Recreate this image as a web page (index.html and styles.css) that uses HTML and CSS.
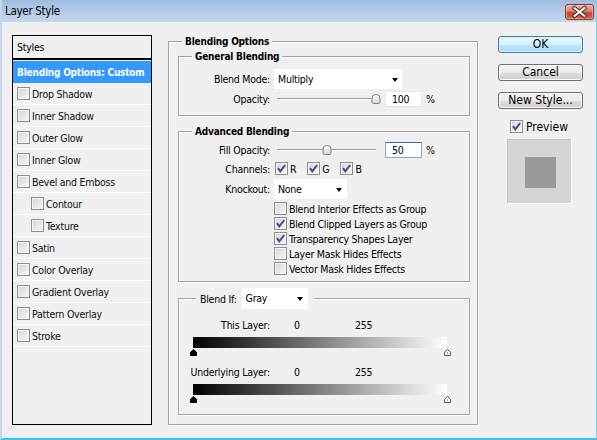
FILE: index.html
```html
<!DOCTYPE html>
<html>
<head>
<meta charset="utf-8">
<title>Layer Style</title>
<link rel="stylesheet" href="styles.css">
</head>
<body>
<div class="window">
  <div class="titlebar">
    <span class="title">Layer Style</span>
    <button class="close" aria-label="Close">
      <svg width="29" height="16" viewBox="0 0 29 16">
        <path d="M9.5 4 L19.5 12 M19.5 4 L9.5 12" stroke="#5a1c12" stroke-width="4" stroke-linecap="square"/>
        <path d="M9.5 4 L19.5 12 M19.5 4 L9.5 12" stroke="#ffffff" stroke-width="2" stroke-linecap="square"/>
      </svg>
    </button>
  </div>

  <div class="content">
    <!-- effect list -->
    <div class="style-list">
      <div class="list-head">Styles</div>
      <div class="list-item selected">Blending Options: Custom</div>
      <div class="list-item"><span class="cb"></span>Drop Shadow</div>
      <div class="list-item"><span class="cb"></span>Inner Shadow</div>
      <div class="list-item"><span class="cb"></span>Outer Glow</div>
      <div class="list-item"><span class="cb"></span>Inner Glow</div>
      <div class="list-item"><span class="cb"></span>Bevel and Emboss</div>
      <div class="list-item sub"><span class="cb"></span>Contour</div>
      <div class="list-item sub"><span class="cb"></span>Texture</div>
      <div class="list-item"><span class="cb"></span>Satin</div>
      <div class="list-item"><span class="cb"></span>Color Overlay</div>
      <div class="list-item"><span class="cb"></span>Gradient Overlay</div>
      <div class="list-item"><span class="cb"></span>Pattern Overlay</div>
      <div class="list-item"><span class="cb"></span>Stroke</div>
    </div>

    <!-- blending options -->
    <div class="group outer">
      <div class="group-title">Blending Options</div>

      <div class="group inner general">
        <div class="group-title">General Blending</div>
        <div class="row r-mode">
          <span class="lbl">Blend Mode:</span>
          <div class="select sel-mode">Multiply<span class="arrow"></span></div>
        </div>
        <div class="row r-num">
          <span class="lbl">Opacity:</span>
          <div class="slider"><div class="track"></div><div class="thumb" style="left:100%"></div></div>
          <div class="num">100</div><span class="pct">%</span>
        </div>
      </div>

      <div class="group inner advanced">
        <div class="group-title">Advanced Blending</div>
        <div class="row r-num r-fill">
          <span class="lbl">Fill Opacity:</span>
          <div class="slider"><div class="track"></div><div class="thumb" style="left:50%"></div></div>
          <div class="num focus">50</div><span class="pct">%</span>
        </div>
        <div class="row r-chan">
          <span class="lbl">Channels:</span>
          <div class="channels">
            <span class="chan"><span class="cb on"><svg width="11" height="11" viewBox="0 0 11 11"><path d="M2 5.2 L4.3 8.3 L9.2 2" fill="none" stroke="#3b4d8c" stroke-width="2"/></svg></span>R</span>
            <span class="chan"><span class="cb on"><svg width="11" height="11" viewBox="0 0 11 11"><path d="M2 5.2 L4.3 8.3 L9.2 2" fill="none" stroke="#3b4d8c" stroke-width="2"/></svg></span>G</span>
            <span class="chan"><span class="cb on"><svg width="11" height="11" viewBox="0 0 11 11"><path d="M2 5.2 L4.3 8.3 L9.2 2" fill="none" stroke="#3b4d8c" stroke-width="2"/></svg></span>B</span>
          </div>
        </div>
        <div class="row r-mode r-knock">
          <span class="lbl">Knockout:</span>
          <div class="select sel-knock">None<span class="arrow"></span></div>
        </div>
        <div class="opts">
          <div class="opt"><span class="cb"></span>Blend Interior Effects as Group</div>
          <div class="opt"><span class="cb on"><svg width="11" height="11" viewBox="0 0 11 11"><path d="M2 5.2 L4.3 8.3 L9.2 2" fill="none" stroke="#3b4d8c" stroke-width="2"/></svg></span>Blend Clipped Layers as Group</div>
          <div class="opt"><span class="cb on"><svg width="11" height="11" viewBox="0 0 11 11"><path d="M2 5.2 L4.3 8.3 L9.2 2" fill="none" stroke="#3b4d8c" stroke-width="2"/></svg></span>Transparency Shapes Layer</div>
          <div class="opt"><span class="cb"></span>Layer Mask Hides Effects</div>
          <div class="opt"><span class="cb"></span>Vector Mask Hides Effects</div>
        </div>
      </div>

      <div class="group inner blendif">
        <div class="blendif-title">
          <span>Blend If:</span>
          <div class="select sel-gray">Gray<span class="arrow"></span></div>
        </div>
        <div class="row r-val">
          <span class="lbl">This Layer:</span>
          <span class="v0">0</span><span class="v1">255</span>
        </div>
        <div class="ramp">
          <div class="bar"></div>
          <div class="markers">
            <svg width="7" height="7" viewBox="0 0 7 7"><path d="M3.5 0.5 L6.5 3.2 L6.5 6.5 L0.5 6.5 L0.5 3.2 Z" fill="#000" stroke="#000"/></svg>
            <svg width="7" height="7" viewBox="0 0 7 7"><path d="M3.5 0.5 L6.5 3.2 L6.5 6.5 L0.5 6.5 L0.5 3.2 Z" fill="#fff" stroke="#555"/><path d="M3.5 3 V5" stroke="#999"/></svg>
          </div>
        </div>
        <div class="row r-val">
          <span class="lbl">Underlying Layer:</span>
          <span class="v0">0</span><span class="v1">255</span>
        </div>
        <div class="ramp">
          <div class="bar"></div>
          <div class="markers">
            <svg width="7" height="7" viewBox="0 0 7 7"><path d="M3.5 0.5 L6.5 3.2 L6.5 6.5 L0.5 6.5 L0.5 3.2 Z" fill="#000" stroke="#000"/></svg>
            <svg width="7" height="7" viewBox="0 0 7 7"><path d="M3.5 0.5 L6.5 3.2 L6.5 6.5 L0.5 6.5 L0.5 3.2 Z" fill="#fff" stroke="#555"/><path d="M3.5 3 V5" stroke="#999"/></svg>
          </div>
        </div>
      </div>
    </div>

    <!-- dialog buttons and preview -->
    <div class="side">
      <button class="btn default">OK</button>
      <button class="btn">Cancel</button>
      <button class="btn">New Style...</button>
      <div class="preview-check">
        <span class="cb on"><svg width="11" height="11" viewBox="0 0 11 11"><path d="M2 5.2 L4.3 8.3 L9.2 2" fill="none" stroke="#3b4d8c" stroke-width="2"/></svg></span>Preview
      </div>
      <div class="preview"><div class="swatch"></div></div>
    </div>
  </div>
</div>
</body>
</html>
```

FILE: styles.css
```css
* { box-sizing: border-box; }

html, body {
  margin: 0;
  padding: 0;
}

body {
  width: 597px;
  height: 440px;
  overflow: hidden;
  background: #f0f0f0;
  font-family: "DejaVu Sans Condensed", "DejaVu Sans", sans-serif;
  font-size: 10.5px;
  letter-spacing: -0.25px;
  color: #000;
}

.window {
  width: 597px;
  height: 440px;
  display: flex;
  flex-direction: column;
  background: #f0f0f0;
  border-left: 2px solid #c3d7ee;
  border-right: 1px solid #7fd3f1;
  border-bottom: 2px solid #3cc3ee;
}

/* title bar */
.titlebar {
  height: 22px;
  flex: none;
  display: flex;
  align-items: flex-start;
  justify-content: space-between;
  padding: 0 2px 0 2px;
  background: linear-gradient(#a0bde1, #b4cbe9 55%, #c4d7ee);
}

.title {
  font-size: 11.5px;
  letter-spacing: -0.3px;
  line-height: 22px;
  padding-left: 1px;
}

.close {
  margin-top: 4px;
  width: 29px;
  height: 16px;
  padding: 0;
  border: 1px solid #8a3425;
  border-radius: 3px;
  background: linear-gradient(#eab3a5, #d98470 45%, #c7452d 55%, #d5634a);
  box-shadow: inset 0 0 0 1px rgba(255, 220, 210, 0.5);
  display: flex;
  align-items: center;
  justify-content: center;
}
.close svg { display: block; margin: -1px; }

.content {
  flex: 1;
  display: flex;
  align-items: flex-start;
  padding: 13px 0 0 10px;
}

/* effect list */
.style-list {
  flex: none;
  width: 140px;
  height: 390px;
  border: 1px solid #000;
  background: #f0f0f0;
}

.list-head {
  height: 24px;
  line-height: 22px;
  padding-left: 4px;
  border-bottom: 2px solid #000;
}

.list-item {
  height: 22px;
  display: flex;
  align-items: center;
  gap: 2px;
  padding-left: 4px;
  border-bottom: 1px solid #fff;
  color: #111;
  white-space: nowrap;
}
.list-item.sub { padding-left: 18px; }

.list-item.selected {
  margin-top: 1px;
  background: #3399ff;
  color: #fff;
  font-weight: bold;
  font-size: 10px;
  letter-spacing: -0.2px;
  border-bottom: none;
}

/* check boxes */
.cb {
  flex: none;
  width: 13px;
  height: 13px;
  border: 1px solid #8e8f8f;
  background: linear-gradient(135deg, #d6d6d6, #f7f7f7);
  box-shadow: inset 0 0 0 1px #f4f4f4;
  display: flex;
  align-items: center;
  justify-content: center;
}
.cb svg { display: block; }

/* group boxes */
.group {
  border: 1px solid #a3a3a3;
  box-shadow: 1px 1px 0 #fff, inset 1px 1px 0 #fff;
}

.group-title {
  width: max-content;
  height: 13px;
  line-height: 13px;
  margin-top: -7px;
  padding: 0 3px;
  background: #f0f0f0;
  font-weight: bold;
  font-size: 10px;
  letter-spacing: -0.2px;
}

.outer {
  flex: none;
  width: 310px;
  height: 384px;
  margin: 6px 0 0 16px;
  padding: 0 7px 0 9px;
}
.outer > .group-title { margin-left: 4px; }

.inner > .group-title { margin-left: 13px; }

.general { margin-top: 8px; padding-bottom: 8px; }
.advanced { margin-top: 15px; padding-bottom: 5px; }
.blendif { margin-top: 16px; padding-bottom: 11px; }

.row {
  display: flex;
  align-items: center;
  white-space: nowrap;
}

.lbl {
  flex: none;
  width: 91px;
  text-align: right;
}

/* drop-down boxes */
.select {
  position: relative;
  height: 20px;
  line-height: 20px;
  padding-left: 4px;
  background: #fff;
}
.arrow {
  position: absolute;
  top: 9px;
  right: 5px;
  width: 0;
  height: 0;
  border-left: 3.5px solid transparent;
  border-right: 3.5px solid transparent;
  border-top: 4px solid #000;
}

.r-mode { height: 20px; margin-top: 6px; }
.sel-mode { width: 128px; margin-left: 4px; }
.sel-mode .arrow { right: 4px; }

.r-num { height: 16px; margin-top: 2px; }
.r-fill { margin-top: 4px; }

/* sliders */
.slider {
  position: relative;
  width: 99px;
  height: 12px;
  margin-left: 7px;
}
.track {
  position: absolute;
  left: 0;
  right: 0;
  top: 5px;
  height: 2px;
  border-top: 1px solid #9d9d9d;
  background: #fff;
}
.thumb {
  position: absolute;
  top: 1px;
  width: 9px;
  height: 10px;
  transform: translateX(-50%);
  border: 1px solid #7c7c7c;
  border-radius: 4px 4px 2px 2px;
  background: linear-gradient(#fdfdfd, #d6d6d6);
}

.num {
  width: 37px;
  height: 16px;
  margin-left: 9px;
  padding-left: 6px;
  line-height: 14px;
  background: #fff;
  border: 1px solid #e6e6e6;
}
.num.focus {
  border-color: #7fa9d6;
  border-top-color: #3d6fa5;
}
.pct { margin-left: 4px; }

/* channels */
.r-chan { height: 15px; margin-top: 3px; }
.channels {
  display: flex;
  gap: 11px;
  margin-left: 5px;
}
.chan {
  display: flex;
  align-items: center;
  gap: 2px;
}

.r-knock { margin-top: 3px; }
.sel-knock { width: 73px; margin-left: 4px; }

/* option check boxes */
.opts {
  margin-top: 2px;
  padding-left: 95px;
}
.opt {
  height: 15px;
  display: flex;
  align-items: center;
  gap: 2px;
  white-space: nowrap;
}

/* blend if */
.blendif-title {
  width: max-content;
  height: 21px;
  margin: -11px 0 0 17px;
  padding: 0 6px 0 4px;
  display: flex;
  align-items: center;
  gap: 5px;
  background: #f0f0f0;
}
.sel-gray { width: 66px; height: 21px; line-height: 21px; }

.r-val { height: 14px; margin-top: 9px; }
.v0 { width: 61px; margin-left: 24px; }

.ramp { margin-left: 14px; }
.bar {
  width: 254px;
  height: 11px;
  margin-top: 5px;
  background: linear-gradient(to right, #000, #fff);
}
.markers {
  width: 261px;
  height: 7px;
  margin: 1px 0 0 -3px;
  display: flex;
  justify-content: space-between;
}
.markers svg { display: block; }

/* buttons and preview */
.side {
  flex: none;
  width: 85px;
  margin: 1px 0 0 20px;
  display: flex;
  flex-direction: column;
  gap: 11px;
}

.btn {
  width: 85px;
  height: 17px;
  padding: 0;
  font-family: "DejaVu Sans Condensed", "DejaVu Sans", sans-serif;
  font-size: 12px;
  line-height: 15px;
  color: #000;
  border: 1px solid #707070;
  border-radius: 3px;
  background: linear-gradient(#f2f2f2, #ebebeb 50%, #dddddd 51%, #cfcfcf);
  box-shadow: inset 0 0 0 1px #fbfbfb;
}
.btn.default {
  border-color: #3c7fb1;
  background: linear-gradient(#eaf6fd, #d9f0fc 50%, #bee6fd 51%, #a7d9f5);
  box-shadow: inset 0 0 0 1px #d8f1fd;
}

.preview-check {
  display: flex;
  align-items: center;
  gap: 3px;
  height: 15px;
  margin: -1px 0 0 12px;
  font-size: 12px;
  letter-spacing: 0;
}

.preview {
  width: 65px;
  height: 65px;
  margin: -6px 0 0 9px;
  padding: 17px 0 0 17px;
  background: #d5d5d5;
  border: 1px solid;
  border-color: #c4c4c4 #fff #fff #c4c4c4;
}
.swatch {
  width: 31px;
  height: 31px;
  background: #999999;
}
```
